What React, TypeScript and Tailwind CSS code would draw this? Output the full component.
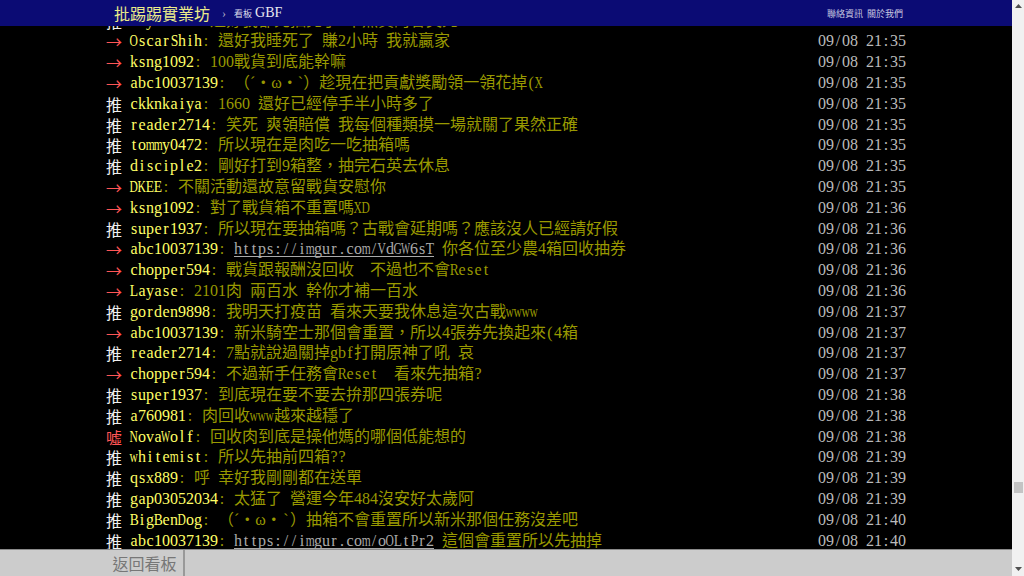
import React from "react";

type Piece = { t: string; link?: boolean };
type Push = { tag: "推" | "→" | "噓"; user: string; content: Piece[]; time: string };

const s60 = new Set(["M", "W"]);
const s72 = new Set(["m", "w", "A", "D", "G", "H", "K", "N", "O", "Q", "U", "V", "X", "Y", "@", "%"]);
const s85 = new Set(["B", "C", "E", "F", "L", "P", "R", "S", "T", "Z"]);

function Mono({ text }: { text: string }) {
  const out: React.ReactNode[] = [];
  let run = "";
  const flush = (k: number) => {
    if (run) {
      out.push(<span key={`r${k}`}>{run}</span>);
      run = "";
    }
  };
  Array.from(text).forEach((ch, i) => {
    if (ch.charCodeAt(0) < 128) {
      flush(i);
      const sc = s60.has(ch)
        ? "scale-x-[0.6]"
        : s72.has(ch)
          ? "scale-x-[0.72]"
          : s85.has(ch)
            ? "scale-x-[0.85]"
            : "";
      out.push(
        <span key={i} className="inline-flex w-[8px] justify-center whitespace-pre">
          <span className={`inline-block ${sc}`}>{ch}</span>
        </span>
      );
    } else {
      run += ch;
    }
  });
  flush(99999);
  return <>{out}</>;
}

const p = (t: string): Piece[] => [{ t }];

const pushes: Push[] = [
  { tag: "推", user: "Rayearth", content: p(": 還好我都先抽完了 不然真的會哭死"), time: "21:35" },
  { tag: "→", user: "OscarShih", content: p(": 還好我睡死了 賺2小時 我就贏家"), time: "21:35" },
  { tag: "→", user: "ksng1092", content: p(": 100戰貨到底能幹嘛"), time: "21:35" },
  { tag: "→", user: "abc10037139", content: p(": （ˊ・ω・ˋ）趁現在把貢獻獎勵領一領花掉(X"), time: "21:35" },
  { tag: "推", user: "ckknkaiya", content: p(": 1660 還好已經停手半小時多了"), time: "21:35" },
  { tag: "推", user: "reader2714", content: p(": 笑死 爽領賠償 我每個種類摸一場就關了果然正確"), time: "21:35" },
  { tag: "推", user: "tommy0472", content: p(": 所以現在是肉吃一吃抽箱嗎"), time: "21:35" },
  { tag: "推", user: "disciple2", content: p(": 剛好打到9箱整，抽完石英去休息"), time: "21:35" },
  { tag: "→", user: "DKEE", content: p(": 不關活動還故意留戰貨安慰你"), time: "21:35" },
  { tag: "→", user: "ksng1092", content: p(": 對了戰貨箱不重置嗎XD"), time: "21:36" },
  { tag: "推", user: "super1937", content: p(": 所以現在要抽箱嗎？古戰會延期嗎？應該沒人已經請好假"), time: "21:36" },
  {
    tag: "→",
    user: "abc10037139",
    content: [{ t: ": " }, { t: "https://imgur.com/VdGW6sT", link: true }, { t: " 你各位至少農4箱回收抽券" }],
    time: "21:36",
  },
  { tag: "→", user: "chopper594", content: p(": 戰貨跟報酬沒回收　不過也不會Reset"), time: "21:36" },
  { tag: "→", user: "Layase", content: p(": 2101肉 兩百水 幹你才補一百水"), time: "21:36" },
  { tag: "推", user: "gorden9898", content: p(": 我明天打疫苗 看來天要我休息這次古戰wwww"), time: "21:37" },
  { tag: "→", user: "abc10037139", content: p(": 新米騎空士那個會重置，所以4張券先換起來(4箱"), time: "21:37" },
  { tag: "推", user: "reader2714", content: p(": 7點就說過關掉gbf打開原神了吼 哀"), time: "21:37" },
  { tag: "→", user: "chopper594", content: p(": 不過新手任務會Reset　看來先抽箱?"), time: "21:37" },
  { tag: "推", user: "super1937", content: p(": 到底現在要不要去拚那四張券呢"), time: "21:38" },
  { tag: "推", user: "a760981", content: p(": 肉回收www越來越穩了"), time: "21:38" },
  { tag: "噓", user: "NovaWolf", content: p(": 回收肉到底是操他媽的哪個低能想的"), time: "21:38" },
  { tag: "推", user: "whitemist", content: p(": 所以先抽前四箱??"), time: "21:39" },
  { tag: "推", user: "qsx889", content: p(": 呼 幸好我剛剛都在送單"), time: "21:39" },
  { tag: "推", user: "gap03052034", content: p(": 太猛了 營運今年484沒安好太歲阿"), time: "21:39" },
  { tag: "推", user: "BigBenDog", content: p(": （ˊ・ω・`）抽箱不會重置所以新米那個任務沒差吧"), time: "21:40" },
  {
    tag: "推",
    user: "abc10037139",
    content: [{ t: ": " }, { t: "https://imgur.com/oOLtPr2", link: true }, { t: " 這個會重置所以先抽掉" }],
    time: "21:40",
  },
];

const font = "font-['Liberation_Serif','Noto_Sans_CJK_TC',serif]";

function Row({ p }: { p: Push }) {
  const tagColor = p.tag === "推" ? "text-[#f0f0f0]" : "text-[#ff5555]";
  return (
    <div className="flex h-[20.8px] leading-[20.8px] whitespace-nowrap text-[16px]">
      <span className={`inline-block w-[24px] font-['Noto_Sans_CJK_TC',sans-serif] ${tagColor}`}>{p.tag}</span>
      <span className="text-[#ffff66]">
        <Mono text={p.user} />
      </span>
      <span className="text-[#999900]">
        {p.content.map((c, i) =>
          c.link ? (
            <span key={i} className="relative inline-block text-[#aaaaaa]">
              <Mono text={c.t} />
              <span className="absolute left-0 right-0 top-[17px] h-px bg-[#aaaaaa]" />
            </span>
          ) : (
            <Mono key={i} text={c.t} />
          )
        )}
      </span>
      <span className="ml-auto text-[#bbbbbb]">
        <Mono text={`09/08 ${p.time}`} />
      </span>
    </div>
  );
}

export default function App() {
  return (
    <div className={`flex h-[576px] w-[1024px] overflow-hidden ${font}`}>
      <div className="flex w-[1012px] flex-col">
        <header className="flex h-[26px] shrink-0 justify-center bg-[#0b0b74]">
          <div className="flex w-[800px] items-center pl-[8px]">
            <span className="text-[16px] leading-none text-[#ebeb8a] font-['Noto_Sans_CJK_TC',sans-serif]">
              批踢踢實業坊
            </span>
            <span className="ml-[12px] text-[12px] leading-none text-[#b0b0c8]">›</span>
            <span className="ml-[8px] text-[9px] leading-none text-[#d8d8e8] font-['Noto_Sans_CJK_TC',sans-serif]">
              看板
            </span>
            <span className="ml-[3px] text-[14px] leading-none text-[#e8e8f0]">GBF</span>
            <span className="ml-auto mr-[3px] flex gap-[4px] text-[9px] leading-none text-[#c8c8e0] font-['Noto_Sans_CJK_TC',sans-serif]">
              <span>聯絡資訊</span>
              <span>關於我們</span>
            </span>
          </div>
        </header>
        <main className="flex-1 overflow-hidden bg-black">
          <div className="mx-auto -mt-[15.4px] w-[800px]">
            {pushes.map((p, i) => (
              <Row key={i} p={p} />
            ))}
          </div>
        </main>
        <footer className="flex h-[27px] shrink-0 justify-center border-t border-[#8a8a8a] bg-[#cccccc]">
          <div className="flex w-[800px]">
            <div className="flex w-[79px] items-center justify-center border-r-2 border-[#999999] text-[16px] text-[#777777] font-['Noto_Sans_CJK_TC',sans-serif]">
              返回看板
            </div>
          </div>
        </footer>
      </div>
      <div className="relative flex w-[12px] flex-col items-center bg-[#f1f1f1]">
        <svg className="mt-[4px]" width="7" height="4" viewBox="0 0 7 4">
          <path d="M3.5 0 L7 4 L0 4 Z" fill="#505050" />
        </svg>
        <div className="absolute left-[2px] top-[482px] h-[11px] w-[9px] bg-[#c4c4c4]" />
        <svg className="mt-auto mb-[5px]" width="7" height="4" viewBox="0 0 7 4">
          <path d="M0 0 L7 0 L3.5 4 Z" fill="#505050" />
        </svg>
      </div>
    </div>
  );
}
